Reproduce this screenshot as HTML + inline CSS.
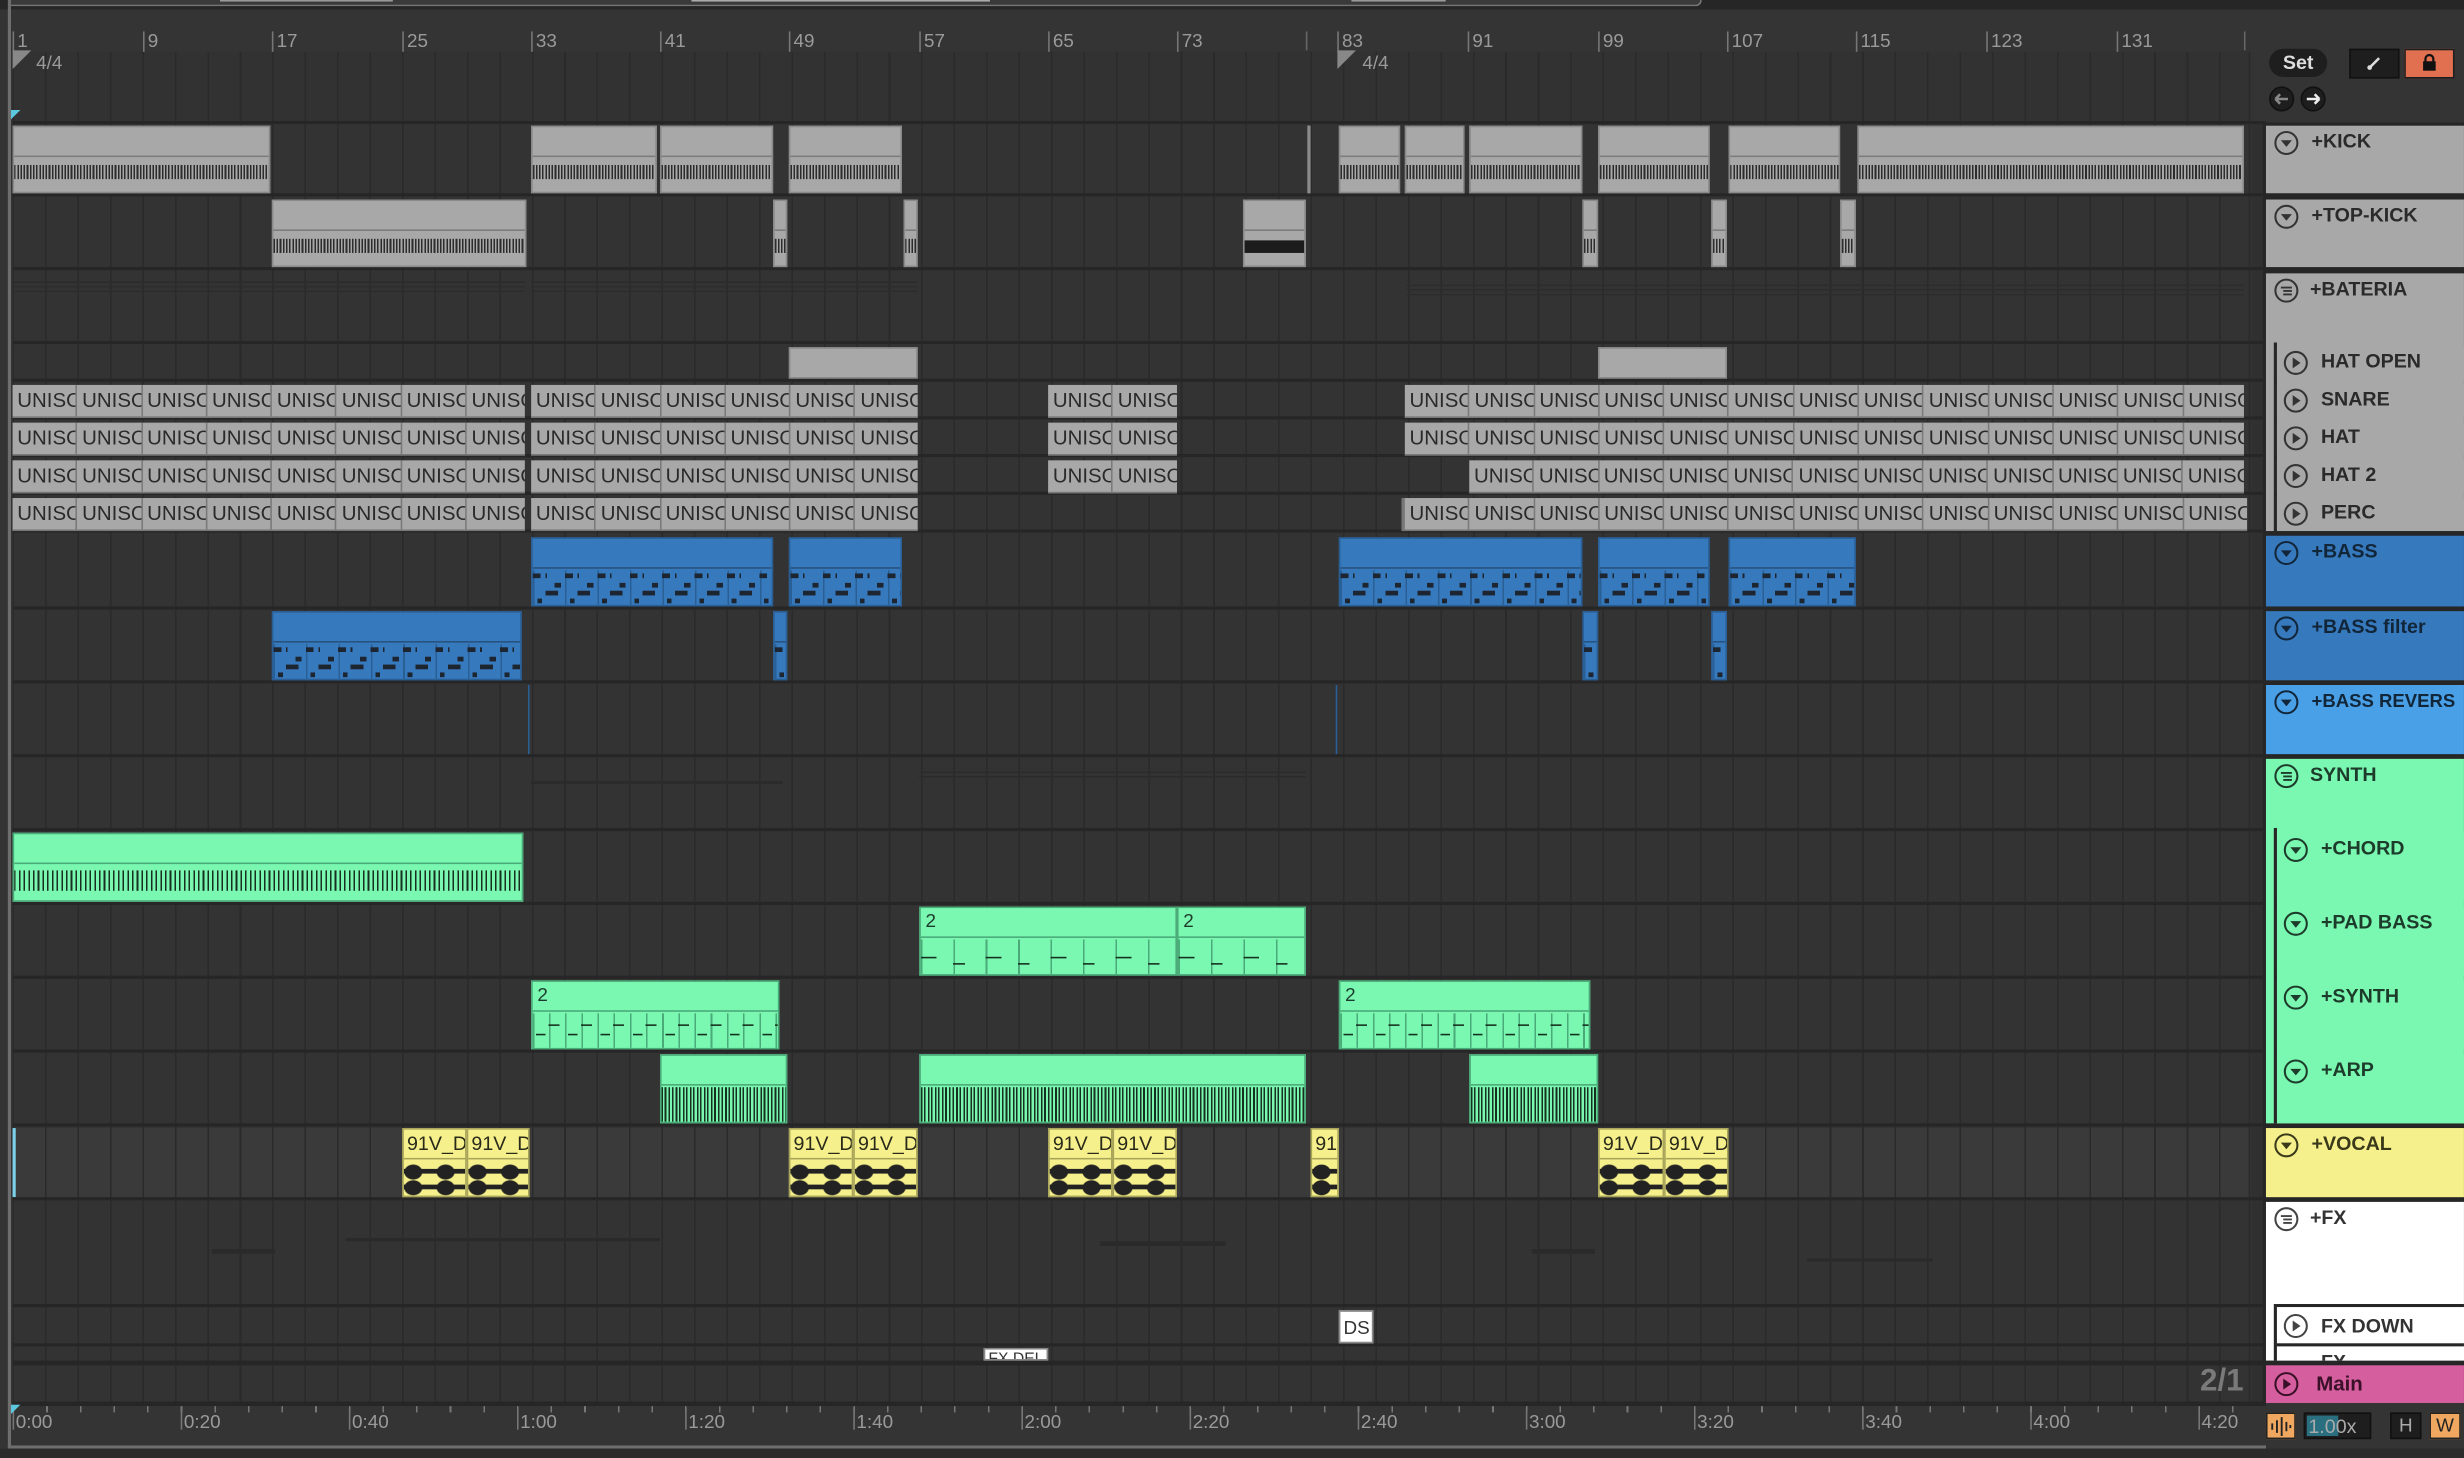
<!DOCTYPE html>
<html><head><meta charset="utf-8"><style>
html,body{margin:0;padding:0;background:#2b2b2b;width:2464px;height:1458px;overflow:hidden}
#s{position:absolute;left:0;top:0;width:1568px;height:928px;transform:scale(1.5714,1.5711);transform-origin:0 0;background:#343434;font-family:"Liberation Sans",sans-serif;overflow:hidden}
.a{position:absolute}
.grid{position:absolute;left:8px;width:1424px;background-image:repeating-linear-gradient(90deg,#2a2a2a 0 1px,transparent 1px 20.65px);background-color:#333}
.sep{position:absolute;left:8px;width:1434px;height:2px;background:#262626}
.cl{position:absolute;overflow:hidden;box-sizing:border-box}
.gk{background:#a8a8a8;border:1px solid #8a8a8a}
.gk i{position:absolute;left:0;right:0;top:58%;height:22%;background:repeating-linear-gradient(90deg,#2c2c2c 0 1px,#a8a8a8 1px 2px)}
.gk u{position:absolute;left:0;right:0;top:44%;height:1px;background:#7c7c7c}
.un{position:absolute;height:20px;background:#a8a8a8;white-space:nowrap;overflow:hidden;font-family:"Liberation Sans Narrow","Liberation Sans",sans-serif;font-size:13px;line-height:20px;color:#2a2a2a;border-bottom:1px solid #777}
.un span{display:inline-block;width:41.3px;box-sizing:border-box;border-right:1px solid #7a7a7a;padding-left:3px;overflow:hidden}
.bl{background:#3779bd;border:1px solid #2a5f96}
.bl u{position:absolute;left:0;right:0;top:42%;height:1px;background:#26537f}
.bl i{position:absolute;left:0;right:0;top:48%;bottom:0;background:
repeating-linear-gradient(90deg,#1c2530 0 5px,transparent 5px 8px,#1c2530 8px 9px,transparent 9px 20.6px) 0 2px/100% 3px repeat-x,
repeating-linear-gradient(90deg,transparent 0 14px,#1c2530 14px 18px,transparent 18px 20.6px) 0 8px/100% 3px repeat-x,
repeating-linear-gradient(90deg,transparent 0 8px,#1c2530 8px 16px,transparent 16px 20.6px) 0 13px/100% 3px repeat-x,
repeating-linear-gradient(90deg,transparent 0 3px,#1c2530 3px 6px,transparent 6px 20.6px) 0 18px/100% 3px repeat-x,
repeating-linear-gradient(90deg,#2a5f96 0 1px,transparent 1px 20.65px)}
.gr{background:#7af7b0;border:1px solid #4aaa78;color:#1d3b2b}
.gr u{position:absolute;left:0;right:0;top:42%;height:1px;background:#4aaa78}
.gr b{position:absolute;left:3px;top:1px;font-weight:normal;font-size:12px;font-family:"Liberation Sans Narrow","Liberation Sans",sans-serif}
.arp i{position:absolute;left:0;right:0;top:48%;bottom:0;background:repeating-linear-gradient(90deg,#16301f 0 1px,#7af7b0 1px 2px,#16301f 2px 3px,#7af7b0 3px 4.5px)}
.chd i{position:absolute;left:0;right:0;top:55%;height:30%;background:repeating-linear-gradient(90deg,#16301f 0 1px,#7af7b0 1px 3px,#16301f 3px 4px,#7af7b0 4px 6px)}
.pad i{position:absolute;left:0;right:0;top:48%;bottom:0;background:
repeating-linear-gradient(90deg,#16301f 0 10px,transparent 10px 41.3px) 0 11px/100% 1px repeat-x,
repeating-linear-gradient(90deg,transparent 0 20.6px,#16301f 20.6px 28px,transparent 28px 41.3px) 0 15px/100% 1px repeat-x,
repeating-linear-gradient(90deg,#4aaa78 0 1px,transparent 1px 20.65px)}
.syn i{position:absolute;left:0;right:0;top:48%;bottom:0;background:
repeating-linear-gradient(90deg,transparent 0 2px,#16301f 2px 8px,transparent 8px 20.6px) 0 13px/100% 1px repeat-x,
repeating-linear-gradient(90deg,transparent 0 10px,#16301f 10px 17px,transparent 17px 20.6px) 0 7px/100% 1px repeat-x,
repeating-linear-gradient(90deg,#4aaa78 0 1px,transparent 1px 10.3px)}
.yl{background:#f5f08c;border:1px solid #a8a45a;color:#2a2a1a}
.yl b{position:absolute;left:2px;top:2px;font-weight:normal;font-size:12.5px;white-space:nowrap;font-family:"Liberation Sans Narrow","Liberation Sans",sans-serif}
.yl u{position:absolute;left:0;right:0;top:44%;height:1px;background:#a8a45a}
.yl i{position:absolute;left:0;right:0;top:50%;bottom:0;background:
radial-gradient(ellipse 6px 5px at 6px 50%,#222 90%,transparent 100%) 0 1px/20.6px 10px repeat-x,
radial-gradient(ellipse 6px 5px at 6px 50%,#222 90%,transparent 100%) 0 11px/20.6px 10px repeat-x,
linear-gradient(#222,#222) 0 4px/100% 3px repeat-x,linear-gradient(#222,#222) 0 14px/100% 3px repeat-x}
.h{position:absolute;left:1442px;width:126px;box-sizing:border-box;font-weight:bold;font-size:12.5px;color:#2a2a2a;overflow:hidden}
.h svg{position:absolute;left:5px;top:3px}
.h b{position:absolute;left:29px;top:3px;white-space:nowrap}
.rl{position:absolute;top:20px;font-size:12px;color:#9a9a9a;font-family:"Liberation Sans Narrow","Liberation Sans",sans-serif;border-left:1px solid #777;height:13px;padding-left:2px;line-height:13px}
.tl{position:absolute;top:896px;font-size:12px;color:#9a9a9a;font-family:"Liberation Sans Narrow","Liberation Sans",sans-serif;border-left:1px solid #777;height:14px;padding-left:1px;line-height:19px}
</style></head><body><div id="s">
<div class="a" style="left:0;top:0;width:1568px;height:6px;background:#262626"></div>
<div class="a" style="left:6px;top:0;width:1076px;height:3px;background:#3a3a3a;border-bottom:1px solid #777;border-right:1px solid #777;border-radius:0 0 4px 0"></div>
<div class="a" style="left:140px;top:0;width:110px;height:1px;background:#999"></div>
<div class="a" style="left:440px;top:0;width:190px;height:1px;background:#aaa"></div>
<div class="a" style="left:860px;top:0;width:60px;height:1px;background:#999"></div>
<div class="a" style="left:5px;top:0;width:2px;height:922px;background:#6e6e6e"></div>
<div class="a" style="left:5px;top:920px;width:1440px;height:2px;background:#6e6e6e"></div>
<div class="grid" style="top:33px;height:45px;background-color:#323232"></div>
<div class="rl" style="left:8px">1</div><div class="rl" style="left:91px">9</div><div class="rl" style="left:173px">17</div><div class="rl" style="left:256px">25</div><div class="rl" style="left:338px">33</div><div class="rl" style="left:420px">41</div><div class="rl" style="left:502px">49</div><div class="rl" style="left:585px">57</div><div class="rl" style="left:667px">65</div><div class="rl" style="left:749px">73</div><div class="rl" style="left:851px">83</div><div class="rl" style="left:934px">91</div><div class="rl" style="left:1017px">99</div><div class="rl" style="left:1099px">107</div><div class="rl" style="left:1181px">115</div><div class="rl" style="left:1264px">123</div><div class="rl" style="left:1347px">131</div>
<div class="a" style="left:831px;top:20px;width:1px;height:12px;background:#666"></div>
<div class="a" style="left:1428px;top:20px;width:1px;height:12px;background:#666"></div>
<svg class="a" style="left:8px;top:32px" width="14" height="14"><polygon points="0,0 12,0 0,12" fill="#888"/></svg>
<div class="a" style="left:23px;top:33px;font-size:12px;color:#9a9a9a">4/4</div>
<svg class="a" style="left:851px;top:32px" width="14" height="14"><polygon points="0,0 12,0 0,12" fill="#888"/></svg>
<div class="a" style="left:867px;top:33px;font-size:12px;color:#9a9a9a">4/4</div>
<svg class="a" style="left:7px;top:70px" width="8" height="8"><polygon points="0,0 6,0 0,6" fill="#5cc8e0"/></svg>
<div class="grid" style="top:78px;height:815px"></div>
<div class="a" style="left:8px;top:718px;width:1424px;height:44px;background:repeating-linear-gradient(90deg,#2a2a2a 0 1px,#3a3a3a 1px 20.65px)"></div>
<div class="a" style="left:8px;top:718px;width:2px;height:44px;background:#7cd0e8"></div>
<div class="a" style="left:1431px;top:33px;width:1px;height:860px;background:#2a2a2a"></div>
<div class="a" style="left:1433px;top:78px;width:9px;height:815px;background:#303030"></div>
<div class="a" style="left:1440px;top:78px;width:2px;height:815px;background:#262626"></div>
<div class="sep" style="top:77px"></div><div class="sep" style="top:123px"></div><div class="sep" style="top:170px"></div><div class="sep" style="top:217px"></div><div class="sep" style="top:241px"></div><div class="sep" style="top:265px"></div><div class="sep" style="top:289px"></div><div class="sep" style="top:313px"></div><div class="sep" style="top:337px"></div><div class="sep" style="top:386px"></div><div class="sep" style="top:433px"></div><div class="sep" style="top:480px"></div><div class="sep" style="top:527px"></div><div class="sep" style="top:574px"></div><div class="sep" style="top:621px"></div><div class="sep" style="top:668px"></div><div class="sep" style="top:715px"></div><div class="sep" style="top:762px"></div><div class="sep" style="top:830px"></div><div class="sep" style="top:855px"></div><div class="sep" style="top:866px;height:3px"></div><div class="sep" style="top:892px;height:3px"></div>
<div class="a" style="left:8px;top:179px;width:326px;height:8px;background:repeating-linear-gradient(#2c2c2c 0 1px,transparent 1px 3px)"></div>
<div class="a" style="left:338px;top:179px;width:246px;height:8px;background:repeating-linear-gradient(#2c2c2c 0 1px,transparent 1px 3px)"></div>
<div class="a" style="left:895px;top:181px;width:533px;height:8px;background:repeating-linear-gradient(#2c2c2c 0 1px,transparent 1px 3px)"></div>
<div class="a" style="left:338px;top:497px;width:160px;height:2px;background:#2b2b2b"></div>
<div class="a" style="left:585px;top:491px;width:246px;height:6px;background:repeating-linear-gradient(#2b2b2b 0 1px,transparent 1px 3px)"></div>
<div class="a" style="left:135px;top:795px;width:40px;height:3px;background:#2a2a2a"></div>
<div class="a" style="left:220px;top:788px;width:200px;height:2px;background:#2a2a2a"></div>
<div class="a" style="left:700px;top:790px;width:80px;height:3px;background:#2a2a2a"></div>
<div class="a" style="left:975px;top:795px;width:40px;height:3px;background:#2a2a2a"></div>
<div class="a" style="left:1150px;top:801px;width:80px;height:2px;background:#2a2a2a"></div>
<div class="cl gk" style="left:8px;top:80px;width:164px;height:43px"><u></u><i></i></div>
<div class="cl gk" style="left:338px;top:80px;width:80px;height:43px"><u></u><i></i></div>
<div class="cl gk" style="left:420px;top:80px;width:72px;height:43px"><u></u><i></i></div>
<div class="cl gk" style="left:502px;top:80px;width:72px;height:43px"><u></u><i></i></div>
<div class="cl gk" style="left:832px;top:80px;width:2px;height:43px"></div>
<div class="cl gk" style="left:852px;top:80px;width:39px;height:43px"><u></u><i></i></div>
<div class="cl gk" style="left:894px;top:80px;width:38px;height:43px"><u></u><i></i></div>
<div class="cl gk" style="left:935px;top:80px;width:72px;height:43px"><u></u><i></i></div>
<div class="cl gk" style="left:1017px;top:80px;width:71px;height:43px"><u></u><i></i></div>
<div class="cl gk" style="left:1100px;top:80px;width:71px;height:43px"><u></u><i></i></div>
<div class="cl gk" style="left:1182px;top:80px;width:246px;height:43px"><u></u><i></i></div>
<div class="cl gk" style="left:173px;top:127px;width:162px;height:43px"><u></u><i></i></div>
<div class="cl gk" style="left:492px;top:127px;width:9px;height:43px"><u></u><i></i></div>
<div class="cl gk" style="left:575px;top:127px;width:9px;height:43px"><u></u><i></i></div>
<div class="cl gk" style="left:791px;top:127px;width:40px;height:43px"><u></u><i style="background:#1c1c1c;top:62%;height:18%"></i></div>
<div class="cl gk" style="left:1007px;top:127px;width:10px;height:43px"><u></u><i></i></div>
<div class="cl gk" style="left:1089px;top:127px;width:10px;height:43px"><u></u><i></i></div>
<div class="cl gk" style="left:1171px;top:127px;width:10px;height:43px"><u></u><i></i></div>
<div class="cl gk" style="left:502px;top:221px;width:82px;height:20px"></div>
<div class="cl gk" style="left:1017px;top:221px;width:82px;height:20px"></div>
<div class="un" style="left:8px;top:245px;width:326px"><span>UNISO</span><span>UNISO</span><span>UNISO</span><span>UNISO</span><span>UNISO</span><span>UNISO</span><span>UNISO</span><span>UNISO</span></div>
<div class="un" style="left:338px;top:245px;width:246px"><span>UNISO</span><span>UNISO</span><span>UNISO</span><span>UNISO</span><span>UNISO</span><span>UNISO</span></div>
<div class="un" style="left:667px;top:245px;width:82px"><span>UNISO</span><span>UNISO</span></div>
<div class="un" style="left:894px;top:245px;width:534px"><span>UNISO</span><span>UNISO</span><span>UNISO</span><span>UNISO</span><span>UNISO</span><span>UNISO</span><span>UNISO</span><span>UNISO</span><span>UNISO</span><span>UNISO</span><span>UNISO</span><span>UNISO</span><span>UNISO</span></div>
<div class="un" style="left:8px;top:269px;width:326px"><span>UNISO</span><span>UNISO</span><span>UNISO</span><span>UNISO</span><span>UNISO</span><span>UNISO</span><span>UNISO</span><span>UNISO</span></div>
<div class="un" style="left:338px;top:269px;width:246px"><span>UNISO</span><span>UNISO</span><span>UNISO</span><span>UNISO</span><span>UNISO</span><span>UNISO</span></div>
<div class="un" style="left:667px;top:269px;width:82px"><span>UNISO</span><span>UNISO</span></div>
<div class="un" style="left:894px;top:269px;width:534px"><span>UNISO</span><span>UNISO</span><span>UNISO</span><span>UNISO</span><span>UNISO</span><span>UNISO</span><span>UNISO</span><span>UNISO</span><span>UNISO</span><span>UNISO</span><span>UNISO</span><span>UNISO</span><span>UNISO</span></div>
<div class="un" style="left:8px;top:293px;width:326px"><span>UNISO</span><span>UNISO</span><span>UNISO</span><span>UNISO</span><span>UNISO</span><span>UNISO</span><span>UNISO</span><span>UNISO</span></div>
<div class="un" style="left:338px;top:293px;width:246px"><span>UNISO</span><span>UNISO</span><span>UNISO</span><span>UNISO</span><span>UNISO</span><span>UNISO</span></div>
<div class="un" style="left:667px;top:293px;width:82px"><span>UNISO</span><span>UNISO</span></div>
<div class="un" style="left:935px;top:293px;width:493px"><span>UNISO</span><span>UNISO</span><span>UNISO</span><span>UNISO</span><span>UNISO</span><span>UNISO</span><span>UNISO</span><span>UNISO</span><span>UNISO</span><span>UNISO</span><span>UNISO</span><span>UNISO</span></div>
<div class="un" style="left:8px;top:317px;width:326px"><span>UNISO</span><span>UNISO</span><span>UNISO</span><span>UNISO</span><span>UNISO</span><span>UNISO</span><span>UNISO</span><span>UNISO</span></div>
<div class="un" style="left:338px;top:317px;width:246px"><span>UNISO</span><span>UNISO</span><span>UNISO</span><span>UNISO</span><span>UNISO</span><span>UNISO</span></div>
<div class="un" style="left:892px;top:317px;width:536px;border-left:2px solid #777"><span>UNISO</span><span>UNISO</span><span>UNISO</span><span>UNISO</span><span>UNISO</span><span>UNISO</span><span>UNISO</span><span>UNISO</span><span>UNISO</span><span>UNISO</span><span>UNISO</span><span>UNISO</span><span>UNISO</span></div>
<div class="cl bl" style="left:338px;top:342px;width:154px;height:44px"><u></u><i></i></div>
<div class="cl bl" style="left:502px;top:342px;width:72px;height:44px"><u></u><i></i></div>
<div class="cl bl" style="left:852px;top:342px;width:155px;height:44px"><u></u><i></i></div>
<div class="cl bl" style="left:1017px;top:342px;width:71px;height:44px"><u></u><i></i></div>
<div class="cl bl" style="left:1100px;top:342px;width:81px;height:44px"><u></u><i></i></div>
<div class="cl bl" style="left:173px;top:389px;width:159px;height:44px"><u></u><i></i></div>
<div class="cl bl" style="left:492px;top:389px;width:9px;height:44px"><u></u><i></i></div>
<div class="cl bl" style="left:1007px;top:389px;width:10px;height:44px"><u></u><i></i></div>
<div class="cl bl" style="left:1089px;top:389px;width:10px;height:44px"><u></u><i></i></div>
<div class="a" style="left:336px;top:436px;width:1px;height:44px;background:#2a5f96"></div>
<div class="a" style="left:850px;top:436px;width:1px;height:44px;background:#2a5f96"></div>
<div class="cl gr chd" style="left:8px;top:530px;width:325px;height:44px"><u></u><i></i></div>
<div class="cl gr pad" style="left:585px;top:577px;width:164px;height:44px"><b>2</b><u></u><i></i></div>
<div class="cl gr pad" style="left:749px;top:577px;width:82px;height:44px"><b>2</b><u></u><i></i></div>
<div class="cl gr syn" style="left:338px;top:624px;width:158px;height:44px"><b>2</b><u></u><i></i></div>
<div class="cl gr syn" style="left:852px;top:624px;width:160px;height:44px"><b>2</b><u></u><i></i></div>
<div class="cl gr arp" style="left:420px;top:671px;width:81px;height:44px"><u></u><i></i></div>
<div class="cl gr arp" style="left:585px;top:671px;width:246px;height:44px"><u></u><i></i></div>
<div class="cl gr arp" style="left:935px;top:671px;width:82px;height:44px"><u></u><i></i></div>
<div class="cl yl" style="left:256px;top:718px;width:41px;height:44px"><b>91V_D</b><u></u><i></i></div>
<div class="cl yl" style="left:297px;top:718px;width:40px;height:44px"><b>91V_D</b><u></u><i></i></div>
<div class="cl yl" style="left:502px;top:718px;width:41px;height:44px"><b>91V_D</b><u></u><i></i></div>
<div class="cl yl" style="left:543px;top:718px;width:41px;height:44px"><b>91V_D</b><u></u><i></i></div>
<div class="cl yl" style="left:667px;top:718px;width:41px;height:44px"><b>91V_D</b><u></u><i></i></div>
<div class="cl yl" style="left:708px;top:718px;width:41px;height:44px"><b>91V_D</b><u></u><i></i></div>
<div class="cl yl" style="left:834px;top:718px;width:18px;height:44px"><b>91</b><u></u><i></i></div>
<div class="cl yl" style="left:1017px;top:718px;width:42px;height:44px"><b>91V_D</b><u></u><i></i></div>
<div class="cl yl" style="left:1059px;top:718px;width:41px;height:44px"><b>91V_D</b><u></u><i></i></div>
<div class="cl" style="left:852px;top:834px;width:22px;height:21px;background:#fff;border:1px solid #888;font-size:12px;color:#333;padding:3px 0 0 2px;font-family:'Liberation Sans Narrow','Liberation Sans',sans-serif">DS</div>
<div class="cl" style="left:626px;top:858px;width:41px;height:8px;background:#fff;border:1px solid #888;font-size:10px;line-height:14px;color:#333;padding-left:2px">FX DEL</div>
<div class="a" style="left:8px;top:895px;width:1432px;height:25px;background:#343434"></div>
<div class="a" style="left:8px;top:895px;width:1424px;height:4px;background:repeating-linear-gradient(90deg,#777 0 1px,transparent 1px 21.4px)"></div>
<div class="tl" style="left:8px">0:00</div><div class="tl" style="left:115px">0:20</div><div class="tl" style="left:222px">0:40</div><div class="tl" style="left:329px">1:00</div><div class="tl" style="left:436px">1:20</div><div class="tl" style="left:543px">1:40</div><div class="tl" style="left:650px">2:00</div><div class="tl" style="left:757px">2:20</div><div class="tl" style="left:864px">2:40</div><div class="tl" style="left:971px">3:00</div><div class="tl" style="left:1078px">3:20</div><div class="tl" style="left:1185px">3:40</div><div class="tl" style="left:1292px">4:00</div><div class="tl" style="left:1399px">4:20</div>
<svg class="a" style="left:7px;top:894px" width="8" height="8"><polygon points="0,0 6,0 0,6" fill="#5cc8e0"/></svg>
<div class="a" style="left:1400px;top:868px;font-size:20px;font-weight:bold;color:#7a7a7a">2/1</div>
<div class="a" style="left:1444px;top:31px;width:37px;height:18px;border-radius:9px;background:#1e1e1e;color:#ddd;font-size:12.5px;font-weight:bold;text-align:center;line-height:18px">Set</div>
<div class="a" style="left:1495px;top:31px;width:30px;height:17px;background:#1e1e1e;border:1px solid #111"><svg width="30" height="17"><line x1="12" y1="11" x2="18" y2="5" stroke="#ddd" stroke-width="1.6"/><circle cx="12" cy="11" r="1.5" fill="#ddd"/></svg></div>
<div class="a" style="left:1530px;top:31px;width:30px;height:17px;background:#e07050;border:1px solid #1e1e1e"><svg width="30" height="17"><rect x="11" y="7" width="8" height="6" fill="#111"/><path d="M12.5 7.5 V5.5 a2.5 2.5 0 0 1 5 0 V7.5" fill="none" stroke="#111" stroke-width="1.4"/></svg></div>
<svg class="a" style="left:1443px;top:54px" width="42" height="18"><circle cx="9" cy="9" r="7.5" fill="#1e1e1e" stroke="#111"/><path d="M5 9 H13 M5 9 L8 6 M5 9 L8 12" stroke="#888" stroke-width="1.6" fill="none"/><circle cx="29" cy="9" r="7.5" fill="#1e1e1e" stroke="#111"/><path d="M25 9 H33 M33 9 L30 6 M33 9 L30 12" stroke="#eee" stroke-width="1.6" fill="none"/></svg>
<div class="a" style="left:1442px;top:78px;width:126px;height:815px;background:#262626"></div>
<div class="h" style="top:80px;height:43px;background:#a8a8a8"><svg width="20" height="20"><circle cx="8" cy="8" r="7" fill="none" stroke="#333" stroke-width="1.3"/><polygon points="4.5,6.3 11.5,6.3 8,10.5" fill="#333"/></svg><b>+KICK</b></div>
<div class="h" style="top:127px;height:43px;background:#a8a8a8"><svg width="20" height="20"><circle cx="8" cy="8" r="7" fill="none" stroke="#333" stroke-width="1.3"/><polygon points="4.5,6.3 11.5,6.3 8,10.5" fill="#333"/></svg><b>+TOP-KICK</b></div>
<div class="h" style="top:174px;height:164px;background:#a8a8a8"><svg width="20" height="20"><circle cx="8" cy="8" r="7" fill="none" stroke="#333" stroke-width="1.3"/><path d="M4.5 6 H11.5 M6 8.2 H11.5 M6 10.4 H11.5" stroke="#333" stroke-width="1.2"/></svg><b style="left:28px">+BATERIA</b></div>
<div class="a" style="left:1447px;top:218px;width:2px;height:120px;background:#262626"></div>
<div class="h" style="left:1449px;width:119px;top:221px;height:20px;background:#a8a8a8"><svg width="20" height="20" style="left:4px;top:2px"><circle cx="8" cy="8" r="7" fill="none" stroke="#333" stroke-width="1.3"/><polygon points="6,4.5 11,8 6,11.5" fill="#333"/></svg><b style="left:28px;top:2px">HAT OPEN</b></div>
<div class="h" style="left:1449px;width:119px;top:245px;height:20px;background:#a8a8a8"><svg width="20" height="20" style="left:4px;top:2px"><circle cx="8" cy="8" r="7" fill="none" stroke="#333" stroke-width="1.3"/><polygon points="6,4.5 11,8 6,11.5" fill="#333"/></svg><b style="left:28px;top:2px">SNARE</b></div>
<div class="h" style="left:1449px;width:119px;top:269px;height:20px;background:#a8a8a8"><svg width="20" height="20" style="left:4px;top:2px"><circle cx="8" cy="8" r="7" fill="none" stroke="#333" stroke-width="1.3"/><polygon points="6,4.5 11,8 6,11.5" fill="#333"/></svg><b style="left:28px;top:2px">HAT</b></div>
<div class="h" style="left:1449px;width:119px;top:293px;height:20px;background:#a8a8a8"><svg width="20" height="20" style="left:4px;top:2px"><circle cx="8" cy="8" r="7" fill="none" stroke="#333" stroke-width="1.3"/><polygon points="6,4.5 11,8 6,11.5" fill="#333"/></svg><b style="left:28px;top:2px">HAT 2</b></div>
<div class="h" style="left:1449px;width:119px;top:317px;height:20px;background:#a8a8a8"><svg width="20" height="20" style="left:4px;top:2px"><circle cx="8" cy="8" r="7" fill="none" stroke="#333" stroke-width="1.3"/><polygon points="6,4.5 11,8 6,11.5" fill="#333"/></svg><b style="left:28px;top:2px">PERC</b></div>
<div class="h" style="top:341px;height:45px;background:#3779bd;color:#12263a"><svg width="20" height="20"><circle cx="8" cy="8" r="7" fill="none" stroke="#12263a" stroke-width="1.3"/><polygon points="4.5,6.3 11.5,6.3 8,10.5" fill="#12263a"/></svg><b>+BASS</b></div>
<div class="h" style="top:389px;height:44px;background:#3779bd;color:#12263a"><svg width="20" height="20"><circle cx="8" cy="8" r="7" fill="none" stroke="#12263a" stroke-width="1.3"/><polygon points="4.5,6.3 11.5,6.3 8,10.5" fill="#12263a"/></svg><b>+BASS filter</b></div>
<div class="h" style="top:436px;height:44px;background:#4aa0e6;color:#12263a;font-size:11.8px"><svg width="20" height="20"><circle cx="8" cy="8" r="7" fill="none" stroke="#12263a" stroke-width="1.3"/><polygon points="4.5,6.3 11.5,6.3 8,10.5" fill="#12263a"/></svg><b>+BASS REVERS</b></div>
<div class="h" style="top:483px;height:232px;background:#7af7b0;color:#1d3b2b"><svg width="20" height="20"><circle cx="8" cy="8" r="7" fill="none" stroke="#1d3b2b" stroke-width="1.3"/><path d="M4.5 6 H11.5 M6 8.2 H11.5 M6 10.4 H11.5" stroke="#1d3b2b" stroke-width="1.2"/></svg><b style="left:28px">SYNTH</b></div>
<div class="a" style="left:1447px;top:527px;width:2px;height:188px;background:#262626"></div>
<div class="h" style="left:1449px;width:119px;top:530px;height:44px;background:#7af7b0;color:#1d3b2b"><svg width="20" height="20" style="left:4px"><circle cx="8" cy="8" r="7" fill="none" stroke="#1d3b2b" stroke-width="1.3"/><polygon points="4.5,6.3 11.5,6.3 8,10.5" fill="#1d3b2b"/></svg><b style="left:28px">+CHORD</b></div>
<div class="h" style="left:1449px;width:119px;top:577px;height:44px;background:#7af7b0;color:#1d3b2b"><svg width="20" height="20" style="left:4px"><circle cx="8" cy="8" r="7" fill="none" stroke="#1d3b2b" stroke-width="1.3"/><polygon points="4.5,6.3 11.5,6.3 8,10.5" fill="#1d3b2b"/></svg><b style="left:28px">+PAD BASS</b></div>
<div class="h" style="left:1449px;width:119px;top:624px;height:44px;background:#7af7b0;color:#1d3b2b"><svg width="20" height="20" style="left:4px"><circle cx="8" cy="8" r="7" fill="none" stroke="#1d3b2b" stroke-width="1.3"/><polygon points="4.5,6.3 11.5,6.3 8,10.5" fill="#1d3b2b"/></svg><b style="left:28px">+SYNTH</b></div>
<div class="h" style="left:1449px;width:119px;top:671px;height:44px;background:#7af7b0;color:#1d3b2b"><svg width="20" height="20" style="left:4px"><circle cx="8" cy="8" r="7" fill="none" stroke="#1d3b2b" stroke-width="1.3"/><polygon points="4.5,6.3 11.5,6.3 8,10.5" fill="#1d3b2b"/></svg><b style="left:28px">+ARP</b></div>
<div class="h" style="top:718px;height:44px;background:#f5f08c;color:#3a3a1a"><svg width="20" height="20"><circle cx="8" cy="8" r="7" fill="none" stroke="#3a3a1a" stroke-width="1.3"/><polygon points="4.5,6.3 11.5,6.3 8,10.5" fill="#3a3a1a"/></svg><b>+VOCAL</b></div>
<div class="h" style="top:765px;height:101px;background:#fff;color:#333"><svg width="20" height="20"><circle cx="8" cy="8" r="7" fill="none" stroke="#444" stroke-width="1.3"/><path d="M4.5 6 H11.5 M6 8.2 H11.5 M6 10.4 H11.5" stroke="#444" stroke-width="1.2"/></svg><b style="left:28px">+FX</b></div>
<div class="a" style="left:1447px;top:830px;width:2px;height:36px;background:#262626"></div>
<div class="a" style="left:1449px;top:830px;width:119px;height:2px;background:#262626"></div>
<div class="h" style="left:1449px;width:119px;top:832px;height:23px;background:#fff;color:#333"><svg width="20" height="20" style="left:4px;top:4px"><circle cx="8" cy="8" r="7" fill="none" stroke="#444" stroke-width="1.3"/><polygon points="6,4.5 11,8 6,11.5" fill="#444"/></svg><b style="left:28px;top:5px">FX DOWN</b></div>
<div class="a" style="left:1449px;top:855px;width:119px;height:2px;background:#262626"></div>
<div class="h" style="left:1449px;width:119px;top:857px;height:9px;background:#fff;color:#333;overflow:hidden"><b style="left:28px;top:3px">FX</b></div>
<div class="h" style="top:869px;height:24px;background:#d45e9e;color:#3a1028;font-size:13px"><svg width="20" height="20" style="top:4px"><circle cx="8" cy="8" r="7" fill="none" stroke="#3a1028" stroke-width="1.3"/><polygon points="6,4.5 11,8 6,11.5" fill="#3a1028"/></svg><b style="left:32px;top:4px">Main</b></div>
<div class="a" style="left:1442px;top:895px;width:126px;height:33px;background:#343434"></div>
<div class="a" style="left:1442px;top:899px;width:19px;height:17px;background:#f0a860;border:1px solid #222;box-sizing:border-box"><svg width="17" height="15"><path d="M3 6v4 M6 4v8 M9 2v12 M12 5v6 M14.5 7v2" stroke="#222" stroke-width="1.2"/></svg></div>
<div class="a" style="left:1466px;top:899px;width:43px;height:17px;background:#1e1e1e;border:1px solid #111;box-sizing:border-box"><div class="a" style="left:1px;top:1px;width:20px;height:13px;background:#2a6f80"></div><div class="a" style="left:2px;top:0;font-size:12.5px;color:#aaa;line-height:16px">1.00x</div></div>
<div class="a" style="left:1521px;top:899px;width:20px;height:17px;background:#1e1e1e;border:1px solid #111;box-sizing:border-box;color:#aaa;font-size:12px;text-align:center;line-height:15px">H</div>
<div class="a" style="left:1546px;top:899px;width:20px;height:17px;background:#f0a860;border:1px solid #222;box-sizing:border-box;color:#222;font-size:12px;text-align:center;line-height:15px">W</div>
<div class="a" style="left:0;top:922px;width:1568px;height:6px;background:#2b2b2b"></div>
</div></body></html>
